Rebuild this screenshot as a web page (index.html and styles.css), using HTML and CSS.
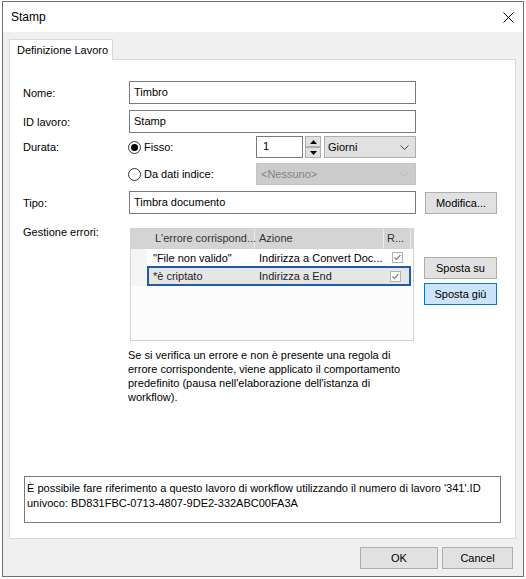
FILE: index.html
```html
<!DOCTYPE html>
<html lang="it">
<head>
<meta charset="utf-8">
<title>Stamp</title>
<link rel="stylesheet" href="styles.css">
</head>
<body>
<div class="window">
  <div class="titlebar">
    <span class="title">Stamp</span>
    <span class="close">
      <svg width="11" height="11" viewBox="0 0 11 11"><path d="M0.5 0.5 L10.5 10.5 M10.5 0.5 L0.5 10.5" stroke="#000" stroke-width="1" fill="none"/></svg>
    </span>
  </div>
  <div class="client">
    <div class="tabs"><div class="tab">Definizione Lavoro</div></div>
    <div class="panel">
      <div class="row row-nome">
        <span class="lbl">Nome:</span>
        <div class="field">Timbro</div>
      </div>
      <div class="row row-id">
        <span class="lbl">ID lavoro:</span>
        <div class="field">Stamp</div>
      </div>
      <div class="row row-durata">
        <span class="lbl">Durata:</span>
        <div class="ropt"><span class="radio on"></span><span>Fisso:</span></div>
        <div class="num">1</div>
        <div class="spin">
          <div class="spinbtn"><svg width="7" height="4" viewBox="0 0 7 4"><path d="M0 4 L7 4 L3.5 0 Z" fill="#000"/></svg></div>
          <div class="spinbtn"><svg width="7" height="4" viewBox="0 0 7 4"><path d="M0 0 L7 0 L3.5 4 Z" fill="#000"/></svg></div>
        </div>
        <div class="combo giorni">
          <span>Giorni</span>
          <svg class="chev" width="9" height="5" viewBox="0 0 9 5"><path d="M0.5 0.5 L4.5 4.5 L8.5 0.5" stroke="#444" stroke-width="1" fill="none"/></svg>
        </div>
      </div>
      <div class="row row-dati">
        <span class="lbl"></span>
        <div class="ropt"><span class="radio"></span><span>Da dati indice:</span></div>
        <div class="combo disabled">
          <span>&lt;Nessuno&gt;</span>
          <svg class="chev" width="9" height="5" viewBox="0 0 9 5"><path d="M0.5 0.5 L4.5 4.5 L8.5 0.5" stroke="#b5b5b5" stroke-width="1" fill="none"/></svg>
        </div>
      </div>
      <div class="row row-tipo">
        <span class="lbl">Tipo:</span>
        <div class="field">Timbra documento</div>
        <button class="btn modifica">Modifica...</button>
      </div>
      <div class="row row-errori">
        <span class="lbl lbl-top">Gestione errori:</span>
        <div class="list">
          <div class="lhead">
            <div class="hc hc1">L'errore corrispond...</div>
            <div class="hc hc2">Azione</div>
            <div class="hc hc3">R...</div>
          </div>
          <div class="lrow">
            <div class="strip"></div>
            <div class="cells">
              <div class="c c1">"File non valido"</div>
              <div class="c c2">Indirizza a Convert Doc...</div>
              <div class="c c3"><span class="chk"><svg width="9" height="9" viewBox="0 0 9 9"><path d="M1.5 4.5 L3.5 6.5 L7.5 2" stroke="#808080" stroke-width="1.2" fill="none"/></svg></span></div>
            </div>
          </div>
          <div class="lrow sel">
            <div class="strip"></div>
            <div class="cells">
              <div class="c c1">*è criptato</div>
              <div class="c c2">Indirizza a End</div>
              <div class="c c3"><span class="chk"><svg width="9" height="9" viewBox="0 0 9 9"><path d="M1.5 4.5 L3.5 6.5 L7.5 2" stroke="#808080" stroke-width="1.2" fill="none"/></svg></span></div>
            </div>
          </div>
        </div>
        <div class="sidebtns">
          <button class="btn side">Sposta su</button>
          <button class="btn side hot">Sposta giù</button>
        </div>
      </div>
      <p class="desc">Se si verifica un errore e non è presente una regola di<br>errore corrispondente, viene applicato il comportamento<br>predefinito (pausa nell'elaborazione dell'istanza di<br>workflow).</p>
      <div class="info">È possibile fare riferimento a questo lavoro di workflow utilizzando il numero di lavoro '341'.ID<br>univoco: BD831FBC-0713-4807-9DE2-332ABC00FA3A</div>
    </div>
    <div class="footer">
      <button class="btn ok">OK</button>
      <button class="btn cancel">Cancel</button>
    </div>
  </div>
</div>
</body>
</html>
```

FILE: styles.css
```css
body {
  margin: 0;
  background: #ffffff;
  font-family: "Liberation Sans", Arial, sans-serif;
  font-size: 11px;
  color: #000;
}

.window {
  box-sizing: border-box;
  width: 522px;
  height: 576px;
  margin: 1px 0 0 2px;
  border: 1px solid #707070;
  background: #f0f0f0;
  display: flex;
  flex-direction: column;
}

.titlebar {
  flex: none;
  height: 30px;
  background: #fff;
  display: flex;
  align-items: center;
  padding-left: 8px;
}

.title {
  font-size: 12px;
}

.close {
  margin-left: auto;
  margin-right: 9px;
  width: 11px;
  height: 11px;
  display: flex;
}

.client {
  flex: 1;
  display: flex;
  flex-direction: column;
  padding: 7px 7px 7px 6px;
}

.tabs {
  height: 20px;
  display: flex;
  flex: none;
}

.tab {
  position: relative;
  z-index: 1;
  box-sizing: border-box;
  width: 104px;
  height: 21px;
  background: #fff;
  border: 1px solid #d9d9d9;
  border-bottom: none;
  padding-left: 7px;
  line-height: 20px;
}

.panel {
  box-sizing: border-box;
  height: 480px;
  flex: none;
  border: 1px solid #d9d9d9;
  background: #fff;
  display: flex;
  flex-direction: column;
  padding: 0 0 15px 13px;
}

.row {
  display: flex;
  align-items: center;
}

.lbl {
  flex: none;
  width: 106px;
}

.row-nome { margin-top: 21px; height: 23px; }
.row-id { margin-top: 6px; height: 23px; }
.row-durata { margin-top: 3px; height: 22px; }
.row-dati { margin-top: 5px; height: 22px; }
.row-tipo { margin-top: 6px; height: 23px; }
.row-errori { margin-top: 14px; align-items: flex-start; }

.lbl-top {
  line-height: 14px;
  margin-top: -3px;
}

.field {
  box-sizing: border-box;
  width: 287px;
  height: 23px;
  border: 1px solid #7a7a7a;
  background: #fff;
  padding: 0 4px;
  line-height: 20px;
}

.ropt {
  flex: none;
  width: 128px;
  margin-left: -1px;
  display: flex;
  align-items: center;
  gap: 3px;
}

.radio {
  box-sizing: border-box;
  width: 13px;
  height: 13px;
  border: 1px solid #333;
  border-radius: 50%;
  background: #fff;
  display: flex;
  align-items: center;
  justify-content: center;
}

.radio.on::after {
  content: "";
  width: 7px;
  height: 7px;
  border-radius: 50%;
  background: #000;
}

.num {
  box-sizing: border-box;
  width: 47px;
  height: 22px;
  border: 1px solid #7a7a7a;
  background: #fff;
  padding-left: 6px;
  line-height: 19px;
}

.spin {
  margin-left: 2px;
  width: 16px;
  height: 22px;
  display: flex;
  flex-direction: column;
  gap: 0;
}

.spinbtn {
  box-sizing: border-box;
  height: 11px;
  border: 1px solid #adadad;
  background: #e1e1e1;
  display: flex;
  align-items: center;
  justify-content: center;
}

.combo {
  box-sizing: border-box;
  height: 22px;
  border: 1px solid #adadad;
  background: #e1e1e1;
  display: flex;
  align-items: center;
  padding-left: 3px;
}

.combo .chev {
  margin-left: auto;
  margin-right: 6px;
}

.giorni {
  width: 92px;
  margin-left: 3px;
}

.combo.disabled {
  width: 160px;
  background: #cccccc;
  border-color: #c4c4c4;
  color: #838383;
  padding-left: 4px;
}

.btn {
  box-sizing: border-box;
  height: 22px;
  background: #e1e1e1;
  border: 1px solid #adadad;
  font-family: inherit;
  font-size: 11px;
  color: #000;
  padding: 0;
}

.modifica {
  width: 72px;
  margin-left: 9px;
}

.list {
  box-sizing: border-box;
  margin-left: 1px;
  width: 284px;
  height: 113px;
  border: 1px solid #d4d4d4;
  background: #fcfcfc;
}

.lhead {
  display: flex;
  height: 20px;
  background: #d4d4d4;
  color: #333;
}

.hc {
  box-sizing: border-box;
  line-height: 19px;
  border-right: 1px solid #ececec;
  white-space: nowrap;
}

.hc1 { width: 124px; padding-left: 24px; }
.hc2 { width: 129px; padding-left: 4px; }
.hc3 { width: 27px; padding-left: 3px; }

.lrow {
  display: flex;
  height: 17px;
}

.strip {
  width: 16px;
  flex: none;
  background: #f5f5f5;
}

.cells {
  display: flex;
  background: #fff;
  width: 264px;
  box-sizing: border-box;
}

.c {
  box-sizing: border-box;
  white-space: nowrap;
  display: flex;
  align-items: center;
}

.c1 { width: 108px; padding-left: 6px; }
.c2 { width: 129px; padding-left: 4px; }
.c3 { width: 27px; padding-left: 8px; }

.lrow.sel {
  height: 20px;
}

.lrow.sel .cells {
  border: 2px solid #1f5ca8;
  background: #e6e6e6;
  color: #222;
}

.lrow.sel .c1 { width: 106px; padding-left: 4px; }
.lrow.sel .c3 { width: 25px; padding-left: 6px; }

.chk {
  box-sizing: border-box;
  width: 11px;
  height: 11px;
  border: 1px solid #b0b0b0;
  background: #fff;
  display: flex;
  align-items: center;
  justify-content: center;
}

.sidebtns {
  margin-left: 10px;
  margin-top: 29px;
  display: flex;
  flex-direction: column;
  gap: 4px;
}

.side {
  width: 73px;
}

.btn.hot {
  background: #cce4f7;
  border-color: #0078d7;
}

.desc {
  margin: 7px 0 0 105px;
  line-height: 14px;
  white-space: nowrap;
}

.info {
  box-sizing: border-box;
  margin-top: auto;
  margin-left: 1px;
  width: 477px;
  height: 47px;
  border: 1px solid #7a7a7a;
  background: #fff;
  padding: 4px 2px;
  line-height: 15px;
  white-space: nowrap;
}

.footer {
  margin-top: 8px;
  margin-right: 3px;
  display: flex;
  justify-content: flex-end;
  gap: 4px;
}

.ok { width: 78px; }
.cancel { width: 71px; }
```
